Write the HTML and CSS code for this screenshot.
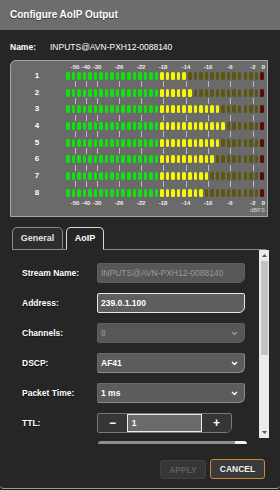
FILE: index.html
```html
<!DOCTYPE html>
<html lang="en">
<head>
    <meta charset="UTF-8">
    <title>Configure AoIP Output</title>
    <link rel="stylesheet" href="styles.css">
</head>
<body>
    <div class="dialog">
        <div class="title">Configure AoIP Output</div>
        <div class="name-row">
            <span class="name-label">Name:</span>
            <span class="name-value">INPUTS@AVN-PXH12-0088140</span>
        </div>
        <!-- level meter, rows are built by the script below -->
        <div class="meter">
            <div class="scale scale-top"></div>
            <div class="channels"></div>
            <div class="scale scale-bottom"></div>
            <div class="unit">dBFS</div>
        </div>
        <div class="tabs">
            <div class="tab">General</div>
            <div class="tab tab-active">AoIP</div>
        </div>
        <div class="tab-panel">
            <div class="form">
                <div class="field">
                    <label>Stream Name:</label>
                    <div class="input input-disabled">INPUTS@AVN-PXH12-0088140</div>
                </div>
                <div class="field">
                    <label>Address:</label>
                    <div class="input input-focus">239.0.1.100</div>
                </div>
                <div class="field">
                    <label>Channels:</label>
                    <div class="input select input-disabled">8
                        <svg class="chevron" width="7" height="5" viewBox="0 0 7 5"><polyline points="1,1 3.5,3.5 6,1" fill="none" stroke="#9a9a9a" stroke-width="1.4"/></svg>
                    </div>
                </div>
                <div class="field">
                    <label>DSCP:</label>
                    <div class="input select">AF41
                        <svg class="chevron" width="7" height="5" viewBox="0 0 7 5"><polyline points="1,1 3.5,3.5 6,1" fill="none" stroke="#fff" stroke-width="1.4"/></svg>
                    </div>
                </div>
                <div class="field">
                    <label>Packet Time:</label>
                    <div class="input select">1 ms
                        <svg class="chevron" width="7" height="5" viewBox="0 0 7 5"><polyline points="1,1 3.5,3.5 6,1" fill="none" stroke="#fff" stroke-width="1.4"/></svg>
                    </div>
                </div>
                <div class="field">
                    <label>TTL:</label>
                    <div class="spinner">
                        <span class="spin-btn spin-minus">&minus;</span>
                        <span class="spin-value">1</span>
                        <span class="spin-btn spin-plus">+</span>
                    </div>
                </div>
                <div class="field-cut"></div>
            </div>
            <div class="scrollbar">
                <svg class="arrow" width="5" height="3" viewBox="0 0 5 3"><polygon points="0,3 5,3 2.5,0" fill="#555"/></svg>
                <div class="thumb"></div>
                <svg class="arrow" width="5" height="3" viewBox="0 0 5 3"><polygon points="0,0 5,0 2.5,3" fill="#555"/></svg>
            </div>
        </div>
        <div class="actions">
            <button class="btn btn-apply">APPLY</button>
            <button class="btn btn-cancel">CANCEL</button>
        </div>
    </div>
    <script>
        // scale marks: label and x offset from the first segment
        var marks = [['-50', 9], ['-40', 20], ['-30', 31], ['-26', 53], ['-22', 75],
                     ['-18', 97], ['-14', 120], ['-10', 142], ['-6', 164], ['-2', 187]];
        // lit segments per channel
        var levels = [22, 23, 28, 29, 28, 27, 26, 25];
        var SEGS = 36;

        var scaleHtml = '';
        var tickHtml = '';
        marks.forEach(function(m){
            scaleHtml += '<span style="left:' + m[1] + 'px">' + m[0] + '</span>';
            tickHtml += '<i style="left:' + m[1] + 'px"></i>';
        });
        scaleHtml += '<span style="left:197.5px">0</span>';
        document.querySelectorAll('.scale').forEach(function(s){
            s.innerHTML = scaleHtml;
        });

        var html = '';
        levels.forEach(function(level, ch){
            html += '<div class="channel"><span class="ch-label">' + (ch + 1) + '</span><div class="segs">';
            for(var i = 0; i < SEGS; i ++){
                var zone = i < 17 ? 'g' : (i < SEGS - 1 ? 'y' : 'r');
                html += '<span class="seg ' + zone + (i < level ? ' on' : '') + '"></span>';
            }
            html += '</div></div>';
            if(ch < levels.length - 1){
                html += '<div class="ticks">' + tickHtml + '</div>';
            }
        });
        document.querySelector('.channels').innerHTML = html;
    </script>
</body>
</html>
```

FILE: styles.css
```css
*{
    margin: 0;
    padding: 0;
    box-sizing: border-box;
}
body{
    width: 280px;
    height: 490px;
    background-color: #1e1e1e;
    font-family: "Liberation Sans", Arial, sans-serif;
    color: #fff;
    overflow: hidden;
}
.dialog{
    height: 489px;
    background-color: #262626;
    border-bottom: 1px solid #9a9a9a;
    border-radius: 0 0 4px 4px;
}
.title{
    height: 30px;
    padding-left: 10px;
    background-color: #6d6d6d;
    font-size: 10px;
    font-weight: bold;
    line-height: 30px;
    text-shadow: 0 1px 1px rgba(0, 0, 0, 0.5);
}
.name-row{
    display: flex;
    height: 12px;
    margin: 11px 0 0 10px;
    font-size: 8.5px;
    line-height: 12px;
}
.name-label{
    width: 40px;
    font-weight: bold;
}
/* level meter */
.meter{
    height: 157px;
    margin: 7px 12px 0 10px;
    padding-top: 2px;
    background-color: #6a6a6a;
    border: 1px solid #a9a9a9;
    border-radius: 6px 0 0 0;
}
.scale{
    position: relative;
    width: 198px;
    height: 8px;
    margin-left: 55px;
}
.scale>span{
    position: absolute;
    top: 0;
    transform: translateX(-50%);
    font-size: 6px;
    font-weight: bold;
    line-height: 8px;
    color: #eee;
}
.scale-bottom{
    margin-top: 2.33px;
}
.channels{
    display: flex;
    flex-direction: column;
    gap: 1.33px;
    margin-top: 1px;
}
.channel{
    display: flex;
    height: 8px;
}
.ch-label{
    width: 52px;
    font-size: 8px;
    font-weight: bold;
    line-height: 8px;
    text-align: center;
}
.segs{
    display: flex;
    justify-content: space-between;
    width: 198px;
    margin-left: 3px;
}
.seg{
    width: 3.5px;
    height: 8px;
    border-radius: 1.5px;
}
.seg.g{ background-color: #0b4a0b; }
.seg.g.on{ background-color: #12e012; }
.seg.y{ background-color: #5a580c; }
.seg.y.on{ background-color: #f8f800; }
.seg.r{ background-color: #5a0a0a; }
.ticks{
    position: relative;
    width: 198px;
    height: 6px;
    margin-left: 55px;
}
.ticks>i{
    position: absolute;
    top: 0;
    width: 1px;
    height: 6px;
    background-color: #bcbcbc;
}
.unit{
    padding-right: 2px;
    font-size: 6px;
    line-height: 7px;
    text-align: right;
    color: #d2d2d2;
}
/* tabs */
.tabs{
    display: flex;
    gap: 3px;
    margin: 10px 0 -1px 0;
    padding-left: 12px;
}
.tab{
    width: 51px;
    height: 23px;
    background-color: #2d2d2d;
    border: 1px solid #8a8a8a;
    border-radius: 5px 5px 0 0;
    font-size: 9px;
    font-weight: bold;
    line-height: 21px;
    text-align: center;
    color: #e4e4e4;
}
.tab-active{
    position: relative;
    z-index: 1;
    width: 38px;
    background-color: #262626;
    border-color: #dadada;
    border-bottom-color: #262626;
    color: #fff;
}
.tab-panel{
    display: flex;
    height: 197px;
    margin: 0 11px 0 12px;
    border-top: 1px solid #8a8a8a;
    border-radius: 0 5px 0 0;
}
.form{
    flex: 1;
    padding: 13px 0 0 10px;
    overflow: hidden;
}
.field{
    display: flex;
    align-items: center;
    height: 20px;
    margin-bottom: 10px;
}
.field>label{
    width: 75px;
    font-size: 8.5px;
    font-weight: bold;
    text-shadow: 0 1px 1px rgba(0, 0, 0, 0.6);
}
.input{
    display: flex;
    align-items: center;
    justify-content: space-between;
    width: 148px;
    height: 20px;
    padding: 0 6px 0 3px;
    background-color: #5c5c5c;
    border: 1px solid #6a6a6a;
    border-right-color: #8a8a8a;
    border-bottom-color: #8a8a8a;
    border-radius: 2px 2px 6px 2px;
    font-size: 8.5px;
    font-weight: bold;
    color: #fff;
}
.input-disabled{
    background-color: #575757;
    border-color: #5e5e5e;
    color: #9a9a9a;
    font-weight: normal;
}
.input-focus{
    background-color: #5e5e5e;
    border-color: #e6e6e6;
}
.spinner{
    display: flex;
    width: 135px;
    height: 20px;
    border: 1px solid #7a7a7a;
    border-radius: 2px 2px 6px 2px;
    overflow: hidden;
}
.spin-btn{
    width: 29px;
    background-color: #363636;
    font-size: 12px;
    font-weight: bold;
    line-height: 18px;
    text-align: center;
}
.spin-value{
    width: 76px;
    padding-left: 4px;
    background-color: #6a6a6a;
    border: 1px solid #ececec;
    font-size: 8.5px;
    font-weight: bold;
    line-height: 16px;
}
.field-cut{
    width: 149px;
    height: 3px;
    margin: -2px 0 0 76px;
    background: linear-gradient(to right, #8e8e8e 92%, #f2f2f2 92%);
    border-radius: 3px 3px 0 0;
}
/* scrollbar */
.scrollbar{
    display: flex;
    flex-direction: column;
    align-items: center;
    width: 10px;
    height: 188px;
    background-color: #ebebeb;
}
.arrow{
    margin: 4px 0;
}
.thumb{
    width: 7px;
    height: 94px;
    margin: 0 0 auto 1px;
    background-color: #c3c3c3;
}
/* buttons */
.actions{
    display: flex;
    justify-content: flex-end;
    align-items: flex-start;
    gap: 4px;
    margin-top: 13px;
    padding-right: 15px;
}
.btn{
    height: 20px;
    border-radius: 3px;
    font-family: "Liberation Sans", Arial, sans-serif;
    font-size: 8.5px;
    font-weight: bold;
}
.btn-apply{
    width: 46px;
    height: 19px;
    margin-top: 1px;
    background-color: #363636;
    border: 1px solid #424242;
    color: #5e5e5e;
}
.btn-cancel{
    width: 55px;
    background-color: #3a3a3a;
    border: 1px solid #c98a33;
    color: #f0f0f0;
}
```
